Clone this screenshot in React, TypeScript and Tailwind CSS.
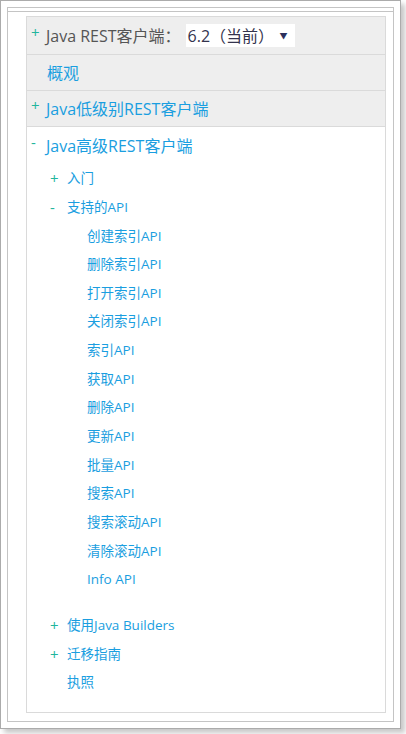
import React from 'react';

const FONT = "font-['Open_Sans','Noto_Sans_CJK_SC',sans-serif]";

const apis = [
  '创建索引API',
  '删除索引API',
  '打开索引API',
  '关闭索引API',
  '索引API',
  '获取API',
  '删除API',
  '更新API',
  '批量API',
  '搜索API',
  '搜索滚动API',
  '清除滚动API',
  'Info API',
];

// small teal toggle glyph (+ or -)
const Toggle = ({ sign }: { sign: '+' | '-' }) => (
  <span className="w-[15px] shrink-0 text-[15px] leading-none text-[#22b59c] -translate-y-[3px]">{sign}</span>
);

const SubRow = ({ sign, label }: { sign?: '+' | '-'; label: string }) => (
  <div className="flex h-[28.67px] items-center pl-[23px]">
    <span className="w-[17px] shrink-0">{sign && <Toggle sign={sign} />}</span>
    <span className="text-[13.5px] text-[#1a9ee0]">{label}</span>
  </div>
);

export default function App() {
  return (
    <div className={`w-[406px] h-[734px] bg-white ${FONT}`}>
      <div className="w-[401px] h-[729px] border border-[#ababab] bg-white p-[6px] shadow-[4px_4px_5px_rgba(0,0,0,0.22)]">
        <div className="flex h-full flex-col border border-[#c4c4c4] pt-[3px]">
          <div className="flex flex-1 flex-col border-t border-[#c4c4c4] pl-[18px] pr-[7px] pt-[4px] pb-[8px]">
            <div className="flex-1 border border-[#dadada]">
              {/* version row */}
              <div className="flex h-[38px] items-center border-b border-[#dadada] bg-[#eeeeee] pl-[4px]">
                <Toggle sign="+" />
                <span className="text-[16px] text-[#555555]">Java REST客户端：</span>
                <div className="ml-[5px] flex h-[23px] w-[109px] items-center bg-white pl-[2px] pr-[7px]">
                  <span className="flex-1 text-[16px] text-[#33334d]">6.2（当前）</span>
                  <span className="text-[8px] text-[#2b2f5c]">▼</span>
                </div>
              </div>
              <div className="flex h-[36px] items-center border-b border-[#dadada] bg-[#eeeeee] pl-[20px]">
                <span className="text-[16px] text-[#1a9ee0]">概观</span>
              </div>
              <div className="flex h-[36px] items-center border-b border-[#dadada] bg-[#eeeeee] pl-[4px]">
                <Toggle sign="+" />
                <span className="text-[16px] text-[#1a9ee0]">Java低级别REST客户端</span>
              </div>

              {/* expanded section */}
              <div className="flex h-[37px] items-center pl-[4px]">
                <Toggle sign="-" />
                <span className="text-[16px] text-[#1a9ee0]">Java高级REST客户端</span>
              </div>
              <SubRow sign="+" label="入门" />
              <SubRow sign="-" label="支持的API" />
              {apis.map((a) => (
                <div key={a} className="flex h-[28.67px] items-center pl-[60px]">
                  <span className="text-[13.5px] text-[#1a9ee0]">{a}</span>
                </div>
              ))}
              <div className="mt-[17px]">
                <SubRow sign="+" label="使用Java Builders" />
                <SubRow sign="+" label="迁移指南" />
                <SubRow label="执照" />
              </div>
            </div>
          </div>
        </div>
      </div>
    </div>
  );
}
